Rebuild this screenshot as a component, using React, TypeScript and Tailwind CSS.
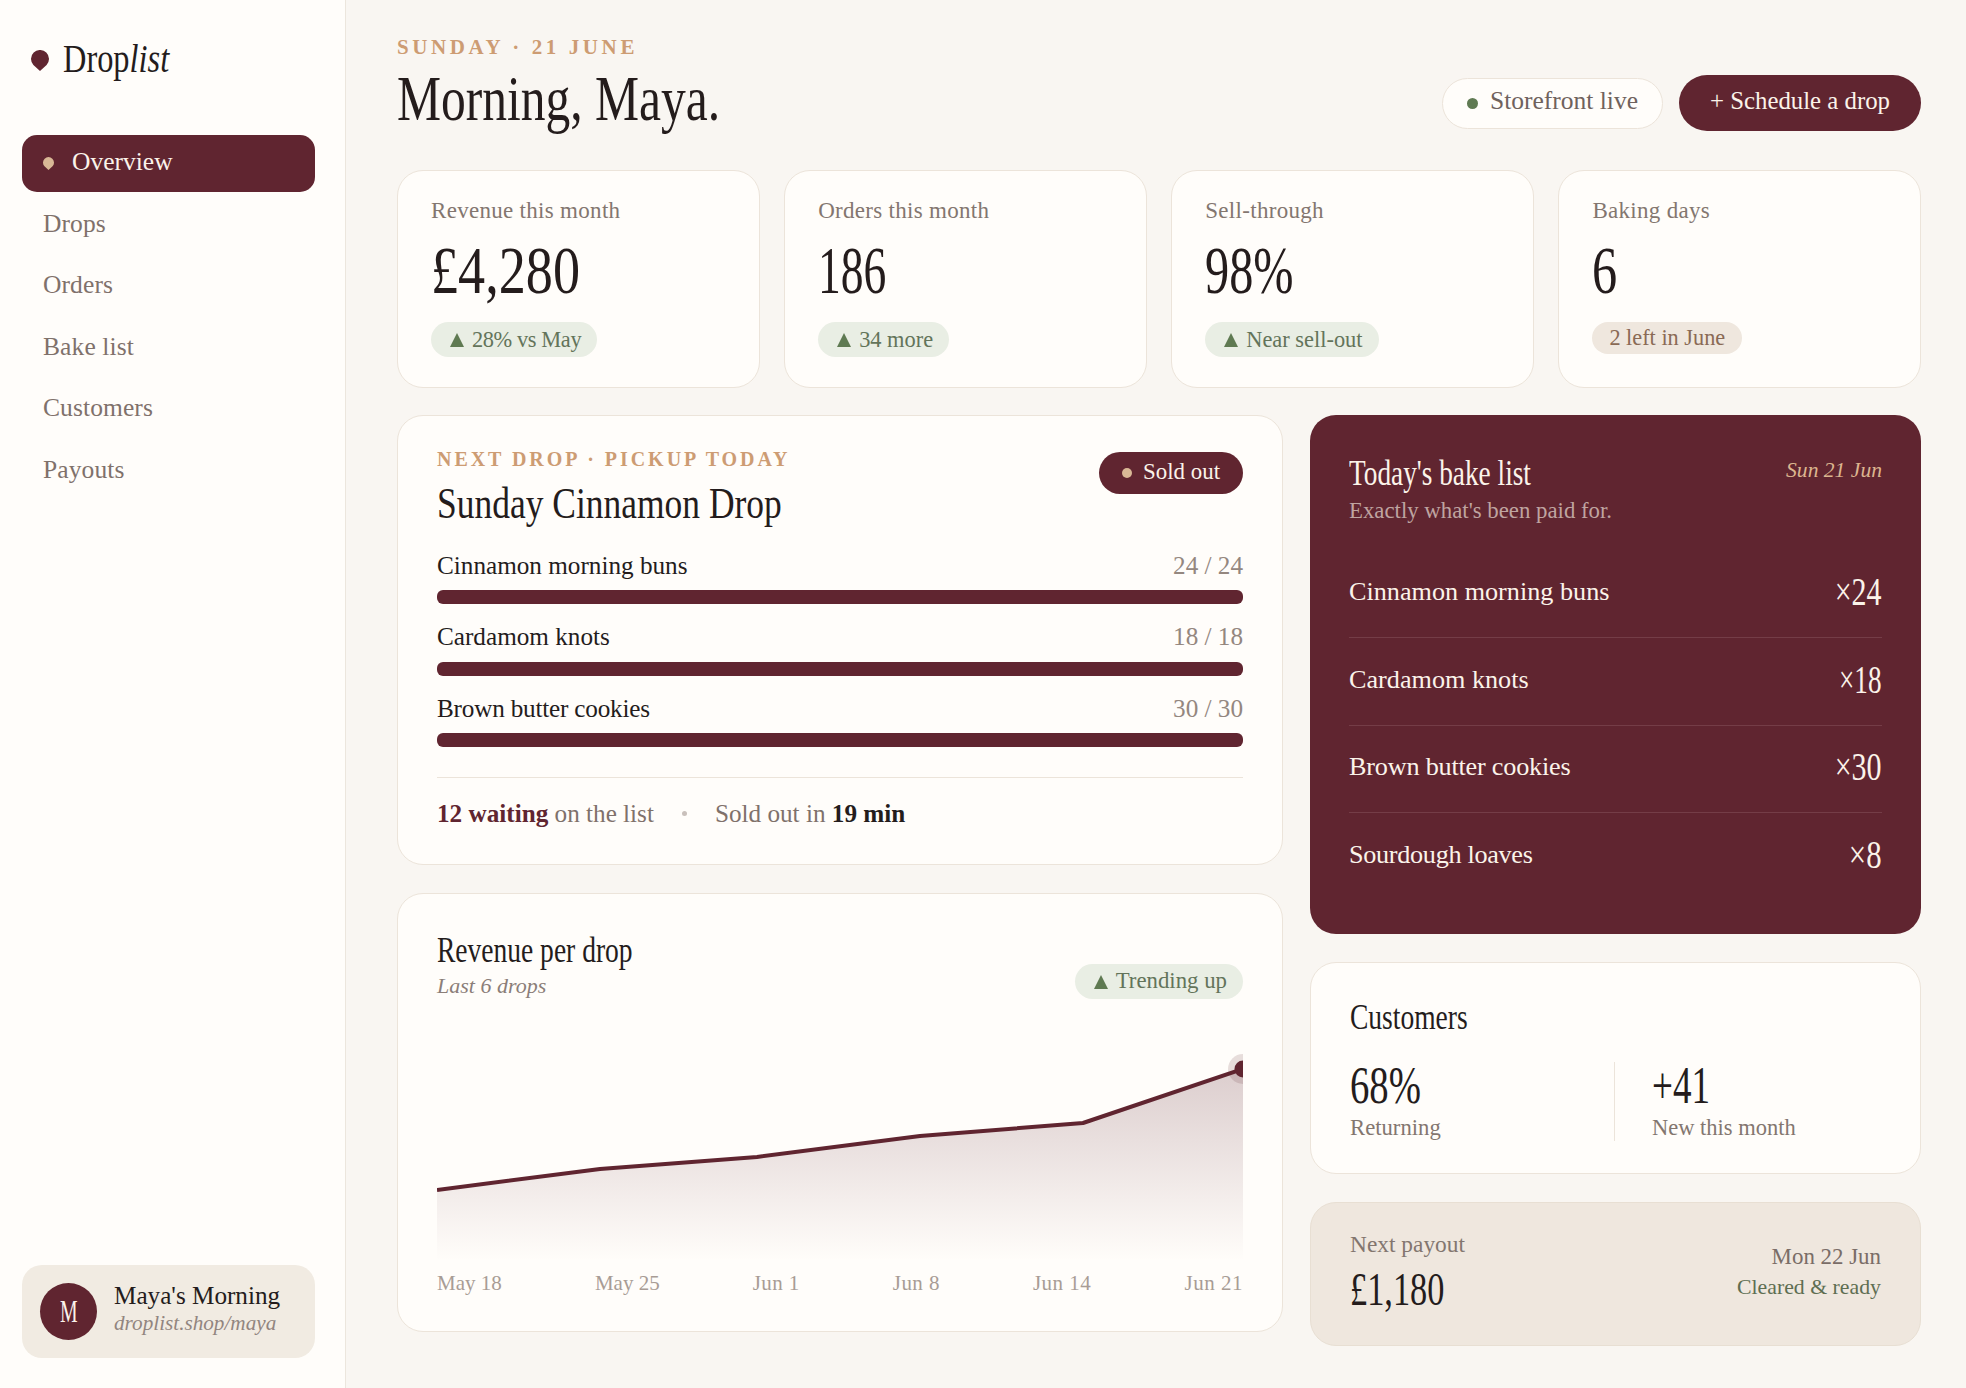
import React from "react";

function Drop({ className }: { className: string }) {
  return (
    <svg viewBox="0 0 18 21" className={className} fill="currentColor">
      <path d="M9 21 L2.4 15.1 A9 9 0 1 1 15.6 15.1 Z" />
    </svg>
  );
}

function Up() {
  return (
    <svg viewBox="0 0 14 14" className="w-[14px] h-[14px] shrink-0 text-[#5f7a52]" fill="currentColor">
      <polygon points="7,0 14,14 0,14" />
    </svg>
  );
}

function Badge({ children, track = "" }: { children: React.ReactNode; track?: string }) {
  return (
    <div className="inline-flex items-center gap-[8px] h-[35px] pl-[19px] pr-[16px] rounded-full bg-[#e9eee4] text-[#63745a] text-[22.4px] leading-[28px]">
      <Up />
      <span className={track}>{children}</span>
    </div>
  );
}

function Stat({ label, value, scale, badge }: { label: string; value: string; scale: string; badge: React.ReactNode }) {
  return (
    <div className="h-[218px] rounded-[26px] border border-[#ece4da] bg-[#fffdfa] pl-[33px] pt-[26px]">
      <div className="text-[23px] leading-[28px] tracking-[0.3px] text-[#83766f]">{label}</div>
      <div className={`mt-[9px] text-[68px] leading-[72px] text-[#241c1c] origin-left ${scale}`}>{value}</div>
      <div className="mt-[16px]">{badge}</div>
    </div>
  );
}

const bars: [string, string, string][] = [
  ["Cinnamon morning buns", "24 / 24", ""],
  ["Cardamom knots", "18 / 18", ""],
  ["Brown butter cookies", "30 / 30", "tracking-[-0.2px]"],
];

const bakes: [string, string, string, string][] = [
  ["Cinnamon morning buns", "×24", "scale-x-[.75]", ""],
  ["Cardamom knots", "×18", "scale-x-[.68]", ""],
  ["Brown butter cookies", "×30", "scale-x-[.75]", "tracking-[-0.2px]"],
  ["Sourdough loaves", "×8", "scale-x-[.77]", "tracking-[-0.3px]"],
];

const nav = ["Drops", "Orders", "Bake list", "Customers", "Payouts"];
const ticks: [string, string][] = [
  ["May 18", ""],
  ["May 25", ""],
  ["Jun 1", "tracking-[0.4px]"],
  ["Jun 8", "tracking-[0.4px]"],
  ["Jun 14", "tracking-[0.5px]"],
  ["Jun 21", "tracking-[0.5px]"],
];

export default function App() {
  return (
    <div className="flex min-h-[1388px] bg-[#f9f6f2] text-[#241c1c] font-['Liberation_Serif',serif]">
      <aside className="w-[346px] shrink-0 flex flex-col justify-between border-r border-[#ece6dd] bg-[#fffdfa] pl-[22px] pr-[30px] pt-[38px] pb-[30px]">
        <div>
          <div className="flex items-center pl-[9px] gap-[14px] h-[40px]">
            <Drop className="w-[18px] h-[21px] mt-[4px] text-[#602530] shrink-0" />
            <div className="text-[41px] leading-[40px] origin-left scale-x-[.79] whitespace-nowrap">
              Drop<span className="italic">list</span>
            </div>
          </div>
          <nav className="mt-[57px] flex flex-col gap-[4px]">
            <div className="h-[57px] rounded-[15px] bg-[#602530] flex items-center pl-[21px] pb-[2px] gap-[18px] text-[25.5px] text-[#fbf3ea]">
              <Drop className="w-[11px] h-[13px] mt-[2px] text-[#d9b896] shrink-0" />
              <span>Overview</span>
            </div>
            {nav.map((n) => (
              <div key={n} className="h-[57.5px] flex items-center pl-[21px] pb-[2px] text-[25.5px] tracking-[0.1px] text-[#7f716b]">
                {n}
              </div>
            ))}
          </nav>
        </div>
        <div className="h-[93px] rounded-[20px] bg-[#f1ebe2] flex items-center pl-[18px] gap-[17px]">
          <div className="w-[57px] h-[57px] rounded-full bg-[#602530] flex items-center justify-center shrink-0">
            <span className="text-[31px] leading-[32px] text-[#fbf3ea] scale-x-[.64]">M</span>
          </div>
          <div className="pb-[6px]">
            <div className="text-[25.2px] leading-[28px] text-[#241c1c]">Maya's Morning</div>
            <div className="text-[21.2px] leading-[26px] italic text-[#92857f]">droplist.shop/maya</div>
          </div>
        </div>
      </aside>

      <main className="flex-1 min-w-0 pl-[51px] pr-[45px] pt-[35px] pb-[42px]">
        <header className="flex items-end justify-between">
          <div>
            <div className="text-[21px] leading-[24px] font-bold tracking-[3.6px] text-[#cd9c73]">SUNDAY · 21 JUNE</div>
            <h1 className="mt-[7px] text-[63px] leading-[66px] font-normal origin-left scale-x-[.786] whitespace-nowrap">Morning, Maya.</h1>
          </div>
          <div className="flex items-center gap-[16px] pb-px">
            <div className="h-[51px] w-[221px] rounded-full border border-[#ece4da] bg-[#fffdfa] flex items-center pl-[24px] pb-[3px] gap-[12px] text-[25.5px] text-[#6f625d]">
              <span className="w-[11px] h-[11px] mt-[3px] rounded-full bg-[#5f7a52] shrink-0" />
              <span>Storefront live</span>
            </div>
            <div className="h-[56px] w-[242px] rounded-full bg-[#602530] flex items-center justify-center pb-[4px] text-[24.8px] text-[#fbf3ea]">+ Schedule a drop</div>
          </div>
        </header>

        <section className="mt-[38px] grid grid-cols-4 gap-[24.5px]">
          <Stat label="Revenue this month" value="£4,280" scale="scale-x-[.797]" badge={<Badge track="tracking-[-0.4px]">28% vs May</Badge>} />
          <Stat label="Orders this month" value="186" scale="scale-x-[.67]" badge={<Badge>34 more</Badge>} />
          <Stat label="Sell-through" value="98%" scale="scale-x-[.71]" badge={<Badge>Near sell-out</Badge>} />
          <Stat
            label="Baking days"
            value="6"
            scale="scale-x-[.74]"
            badge={
              <div className="inline-flex items-center h-[32px] px-[17px] rounded-full bg-[#efe7de] text-[22.3px] leading-[28px] text-[#8a6a55]">2 left in June</div>
            }
          />
        </section>

        <section className="mt-[27px] grid grid-cols-[886px_1fr] gap-[27px] items-start">
          <div className="flex flex-col gap-[28.5px]">
            <div className="rounded-[26px] border border-[#ece4da] bg-[#fffdfa] px-[39px] pt-[31px] pb-[35px]">
              <div className="flex items-start justify-between">
                <div>
                  <div className="text-[20px] leading-[24px] font-bold tracking-[2.95px] text-[#cd9c73]">NEXT DROP · PICKUP TODAY</div>
                  <div className="mt-[10px] text-[44px] leading-[46px] origin-left scale-x-[.806] whitespace-nowrap">Sunday Cinnamon Drop</div>
                </div>
                <div className="mt-[5px] h-[42px] rounded-full bg-[#602530] flex items-center pl-[23px] pr-[23px] pb-[2px] gap-[11px] text-[22.9px] text-[#fbf3ea]">
                  <span className="w-[10px] h-[10px] mt-[2px] rounded-full bg-[#d9b896]" />
                  <span>Sold out</span>
                </div>
              </div>
              <div className="mt-[23.5px] flex flex-col gap-[18px]">
                {bars.map(([n, c, t]) => (
                  <div key={n}>
                    <div className="flex justify-between h-[30px] leading-[30px] text-[25.2px]">
                      <span className={`text-[#241c1c] ${t}`}>{n}</span>
                      <span className="text-[#94877f]">{c}</span>
                    </div>
                    <div className="mt-[9.5px] h-[14px] rounded-[6px] bg-[#602530]" />
                  </div>
                ))}
              </div>
              <div className="mt-[30px] border-t border-[#ece4da] pt-[20.5px] flex items-center text-[25.2px] leading-[30px]">
                <span className="text-[#7f716b]">
                  <b className="font-bold text-[#602530]">12 waiting</b> on the list
                </span>
                <span className="mx-[28px] w-[5px] h-[5px] rounded-full bg-[#c9c0bb]" />
                <span className="text-[#7f716b]">
                  Sold out in <b className="font-bold text-[#241c1c]">19 min</b>
                </span>
              </div>
            </div>

            <div className="rounded-[26px] border border-[#ece4da] bg-[#fffdfa] px-[39px] pt-[37.5px] pb-[34.5px]">
              <div className="flex items-end justify-between">
                <div>
                  <div className="text-[35px] leading-[38px] origin-left scale-x-[.786] whitespace-nowrap">Revenue per drop</div>
                  <div className="mt-[3.5px] text-[22px] leading-[26px] italic text-[#8b7e78]">Last 6 drops</div>
                </div>
                <div className="inline-flex items-center gap-[8px] h-[35px] pl-[19px] pr-[16px] rounded-full bg-[#e9eee4] text-[#63745a] text-[22.8px]">
                  <Up />
                  <span>Trending up</span>
                </div>
              </div>
              <svg viewBox="0 0 806 222" className="mt-[41px] block w-full h-[222px]">
                <defs>
                  <linearGradient id="area" x1="0" y1="0" x2="0" y2="1">
                    <stop offset="0" stopColor="#602530" stopOpacity="0.22" />
                    <stop offset="1" stopColor="#602530" stopOpacity="0" />
                  </linearGradient>
                </defs>
                <path d="M0 150 L163 129 L320 117 L483 96 L646 83 L806 29 L806 221 L0 221 Z" fill="url(#area)" />
                <polyline points="0,150 163,129 320,117 483,96 646,83 806,29" fill="none" stroke="#602530" strokeWidth="4" strokeLinejoin="round" />
                <circle cx="806" cy="29" r="15" fill="#602530" fillOpacity="0.15" />
                <circle cx="806" cy="29" r="8.5" fill="#602530" />
              </svg>
              <div className="mt-[8px] flex justify-between text-[21px] leading-[26px] text-[#a89c95]">
                {ticks.map(([t, k]) => (
                  <span key={t} className={k}>{t}</span>
                ))}
              </div>
            </div>
          </div>

          <div className="flex flex-col gap-[28px]">
            <div className="rounded-[26px] bg-[#602530] px-[39px] pt-[39.5px] pb-[33.5px] text-[#fbf3ea]">
              <div className="flex items-start justify-between">
                <div>
                  <div className="text-[35px] leading-[38px] origin-left scale-x-[.78] whitespace-nowrap">Today's bake list</div>
                  <div className="mt-[5px] text-[22.8px] leading-[26px] text-[#bfa4a0]">Exactly what's been paid for.</div>
                </div>
                <div className="mt-[2.5px] text-[21.6px] leading-[26px] italic text-[#dcb58f]">Sun 21 Jun</div>
              </div>
              <div className="mt-[27px]">
                {bakes.map(([n, c, s, t], i) => (
                  <div key={n} className={`h-[87.5px] flex items-center justify-between pb-[3px] ${i < 3 ? "border-b border-[#743d47]" : ""}`}>
                    <span className={`text-[26.2px] leading-[30px] ${t}`}>{n}</span>
                    <span className={`text-[40px] leading-[42px] origin-right ${s}`}>{c}</span>
                  </div>
                ))}
              </div>
            </div>

            <div className="rounded-[26px] border border-[#ece4da] bg-[#fffdfa] px-[39px] pt-[36px] pb-[32px]">
              <div className="text-[35px] leading-[38px] origin-left scale-x-[.786] whitespace-nowrap">Customers</div>
              <div className="mt-[25px] grid grid-cols-[264px_1fr]">
                <div>
                  <div className="text-[53px] leading-[46px] origin-left scale-x-[.73]">68%</div>
                  <div className="mt-[6.5px] text-[22.7px] leading-[26px] text-[#83766f]">Returning</div>
                </div>
                <div className="border-l border-[#ece4da] pl-[37px]">
                  <div className="text-[53px] leading-[46px] origin-left scale-x-[.7]">+41</div>
                  <div className="mt-[6.5px] text-[22.5px] leading-[26px] text-[#83766f]">New this month</div>
                </div>
              </div>
            </div>

            <div className="rounded-[26px] border border-[#e8dfd3] bg-[#efe7de] px-[39px] pt-[27px] pb-[31px] flex items-center justify-between">
              <div>
                <div className="text-[23.4px] leading-[28px] text-[#83766f]">Next payout</div>
                <div className="mt-[6px] text-[47px] leading-[50px] origin-left scale-x-[.73]">£1,180</div>
              </div>
              <div className="text-right text-[22px] leading-[30px]">
                <div className="text-[#7a6d67] text-[22.9px]">Mon 22 Jun</div>
                <div className="text-[#5e6e52] text-[21.8px]">Cleared &amp; ready</div>
              </div>
            </div>
          </div>
        </section>
      </main>
    </div>
  );
}
